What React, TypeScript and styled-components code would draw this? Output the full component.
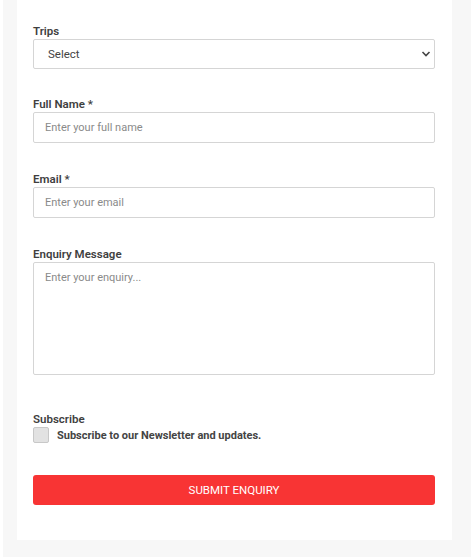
import { createGlobalStyle } from 'styled-components';
import styled from 'styled-components';

const GlobalStyle = createGlobalStyle`
    html, body {
        margin: 0;
        padding: 0;
        background: #ffffff;
        font-family: Roboto, 'Liberation Sans', Arial, sans-serif;
    }
`;

const Page = styled.div`
    width: 468px;
    margin-left: 3px;
    height: 557px;
    background: #f7f7f7;
    box-sizing: border-box;
    padding: 0 19px 17px 14px;
`;

const Card = styled.form`
    background: #ffffff;
    height: 540px;
    box-sizing: border-box;
    padding: 24px 17px 0 16px;
    display: flex;
    flex-direction: column;
`;

const Field = styled.div<{ $gap?: number }>`
    display: flex;
    flex-direction: column;
    margin-bottom: ${({ $gap }) => $gap ?? 29}px;
`;

const Label = styled.label`
    font-size: 11.5px;
    font-weight: 600;
    color: #3f3f3f;
    line-height: 14px;
    margin-bottom: 1px;
`;

const SelectWrap = styled.div`
    position: relative;
`;

const Select = styled.select`
    appearance: none;
    width: 100%;
    height: 30px;
    box-sizing: border-box;
    border: 1px solid #d5d5d5;
    border-radius: 2px;
    background: #ffffff;
    padding: 0 30px 0 14px;
    font-family: inherit;
    font-size: 11.5px;
    color: #444444;
    outline: none;
`;

const Chevron = styled.svg`
    position: absolute;
    right: 4px;
    top: 11px;
    pointer-events: none;
`;

const Input = styled.input`
    width: 100%;
    height: 31px;
    box-sizing: border-box;
    border: 1px solid #d5d5d5;
    border-radius: 2px;
    padding: 0 11px;
    font-family: inherit;
    font-size: 11px;
    color: #444444;
    outline: none;

    &::placeholder {
        color: #8a8a8a;
    }
`;

const TextArea = styled.textarea`
    width: 100%;
    height: 113px;
    box-sizing: border-box;
    border: 1px solid #d5d5d5;
    border-radius: 2px;
    padding: 8px 11px;
    font-family: inherit;
    font-size: 11px;
    color: #444444;
    resize: none;
    outline: none;

    &::placeholder {
        color: #8a8a8a;
    }
`;

const CheckRow = styled.label`
    display: flex;
    align-items: center;
    gap: 8px;
`;

const Box = styled.input`
    appearance: none;
    width: 16px;
    height: 16px;
    margin: 0;
    box-sizing: border-box;
    border: 1px solid #c8c8c8;
    border-radius: 2px;
    background: #e2e2e2;
`;

const CheckText = styled.span`
    font-size: 11px;
    font-weight: 700;
    color: #444444;
`;

const SubmitButton = styled.button`
    width: 100%;
    height: 30px;
    border: none;
    border-radius: 3px;
    background: #f83434;
    color: #ffffff;
    font-family: inherit;
    font-size: 11.5px;
    font-weight: 400;
    cursor: pointer;
`;

export default function App() {
    return (
        <>
            <GlobalStyle />
            <Page>
                <Card onSubmit={(e) => e.preventDefault()}>
                    <Field $gap={28}>
                        <Label>Trips</Label>
                        <SelectWrap>
                            <Select defaultValue="">
                                <option value="">Select</option>
                            </Select>
                            <Chevron width="10" height="8" viewBox="0 0 10 8">
                                <path d="M1.5 2 L5 5.5 L8.5 2" fill="none" stroke="#444" strokeWidth="1.6" />
                            </Chevron>
                        </SelectWrap>
                    </Field>
                    <Field>
                        <Label>Full Name *</Label>
                        <Input placeholder="Enter your full name" />
                    </Field>
                    <Field>
                        <Label>Email *</Label>
                        <Input type="email" placeholder="Enter your email" />
                    </Field>
                    <Field $gap={37}>
                        <Label>Enquiry Message</Label>
                        <TextArea placeholder="Enter your enquiry..." />
                    </Field>
                    <Field $gap={32}>
                        <Label>Subscribe</Label>
                        <CheckRow>
                            <Box type="checkbox" />
                            <CheckText>Subscribe to our Newsletter and updates.</CheckText>
                        </CheckRow>
                    </Field>
                    <SubmitButton type="submit">SUBMIT ENQUIRY</SubmitButton>
                </Card>
            </Page>
        </>
    );
}
